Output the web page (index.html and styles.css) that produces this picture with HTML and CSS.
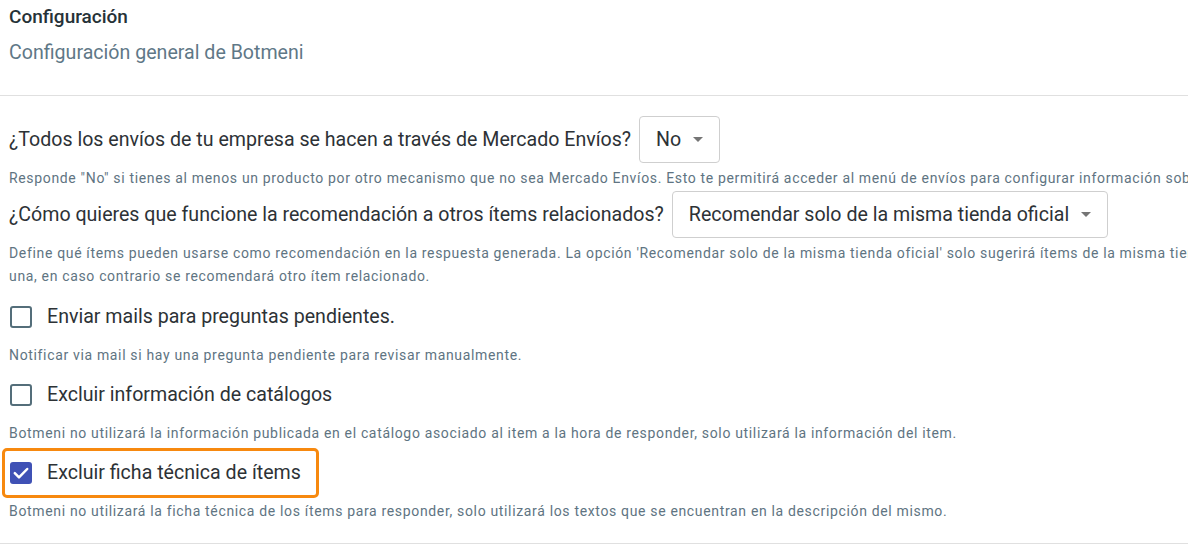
FILE: index.html
```html
<!DOCTYPE html>
<html lang="es">
<head>
<meta charset="utf-8">
<title>Configuración</title>
<link rel="stylesheet" href="styles.css">
</head>
<body>
<div class="page">
  <header class="head">
    <h1 class="title">Configuración</h1>
    <p class="subtitle">Configuración general de Botmeni</p>
  </header>
  <hr class="divider">
  <section class="settings">
    <div class="question">
      <span class="q-text">¿Todos los envíos de tu empresa se hacen a través de Mercado Envíos?</span>
      <div class="select"><span>No</span><span class="caret"></span></div>
    </div>
    <p class="help">Responde "No" si tienes al menos un producto por otro mecanismo que no sea Mercado Envíos. Esto te permitirá acceder al menú de envíos para configurar información sobre tus envíos.</p>

    <div class="question">
      <span class="q-text">¿Cómo quieres que funcione la recomendación a otros ítems relacionados?</span>
      <div class="select"><span>Recomendar solo de la misma tienda oficial</span><span class="caret"></span></div>
    </div>
    <p class="help help-before-check">Define qué ítems pueden usarse como recomendación en la respuesta generada. La opción 'Recomendar solo de la misma tienda oficial' solo sugerirá ítems de la misma tienda oficial si hay una, en caso contrario se recomendará otro ítem relacionado.</p>

    <label class="check-row">
      <span class="box"></span>
      <span class="check-label">Enviar mails para preguntas pendientes.</span>
    </label>
    <p class="help">Notificar via mail si hay una pregunta pendiente para revisar manualmente.</p>

    <label class="check-row">
      <span class="box"></span>
      <span class="check-label">Excluir información de catálogos</span>
    </label>
    <p class="help">Botmeni no utilizará la información publicada en el catálogo asociado al item a la hora de responder, solo utilizará la información del item.</p>

    <label class="check-row highlighted">
      <span class="box checked">
        <svg viewBox="0 0 22 22" width="22" height="22"><path d="M4.8 11.2l4.2 4.2L17.2 7" fill="none" stroke="#fff" stroke-width="2.5" stroke-linecap="round" stroke-linejoin="round"/></svg>
      </span>
      <span class="check-label">Excluir ficha técnica de ítems</span>
    </label>
    <p class="help">Botmeni no utilizará la ficha técnica de los ítems para responder, solo utilizará los textos que se encuentran en la descripción del mismo.</p>
  </section>
  <hr class="divider bottom">
</div>
</body>
</html>
```
FILE: styles.css
```css
html, body {
  margin: 0;
  padding: 0;
  background: #ffffff;
  overflow: hidden;
}
body {
  font-family: Roboto, "Liberation Sans", Arial, sans-serif;
  color: #2d3236;
}
.page {
  width: 1335px;
}
.head {
  padding: 5px 9px 0;
  height: 95px;
  box-sizing: border-box;
}
.title {
  margin: 0;
  font-size: 19px;
  font-weight: 500;
  line-height: 24px;
  color: #263238;
}
.subtitle {
  margin: 12px 0 0;
  font-size: 19.6px;
  line-height: 24px;
  color: #5f7887;
}
.divider {
  margin: 0;
  border: 0;
  border-top: 1px solid #e0e0e0;
}
.settings {
  padding: 20px 9px 0;
}
.question {
  display: flex;
  align-items: center;
  gap: 8px;
  font-size: 19.6px;
  line-height: 24px;
  color: #2d3236;
}
.select {
  display: inline-flex;
  align-items: center;
  gap: 12px;
  height: 47px;
  box-sizing: border-box;
  padding: 0 16px;
  border: 1px solid #cfcfcf;
  border-radius: 4px;
  font-size: 19.6px;
  color: #2d3236;
}
.caret {
  width: 0;
  height: 0;
  border-left: 5px solid transparent;
  border-right: 5px solid transparent;
  border-top: 5px solid #757575;
}
.help {
  margin: 4px 0 1px;
  font-size: 14px;
  line-height: 23px;
  letter-spacing: 0.66px;
  color: #607482;
}
.help-before-check {
  margin-bottom: 7px;
}
.check-row {
  display: inline-flex;
  align-items: center;
  height: 44px;
  padding-right: 15px;
  cursor: pointer;
}
.check-row + .help {
  margin: 5px 0 6px;
}
.box {
  width: 22px;
  height: 22px;
  box-sizing: border-box;
  border: 2.5px solid #546e7a;
  border-radius: 3px;
  margin: 0 15px 0 1px;
  display: flex;
  align-items: center;
  justify-content: center;
}
.box.checked {
  border: 0;
  background: #3f51b5;
}
.check-label {
  font-size: 19.6px;
  line-height: 24px;
  color: #2d3236;
}
.highlighted {
  outline: 3px solid #f7890f;
  border-radius: 2px;
  margin-left: -4px;
  padding-left: 4px;
}
.bottom {
  margin-top: 20px;
}
```
